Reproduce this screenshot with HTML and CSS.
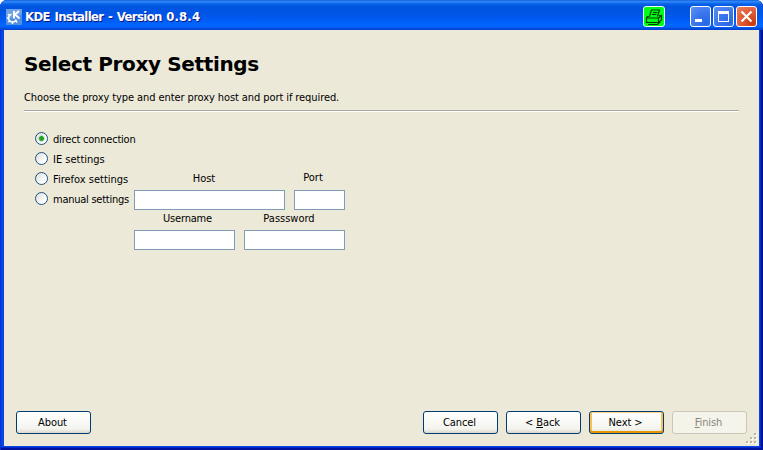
FILE: index.html
```html
<!DOCTYPE html>
<html lang="en">
<head>
<meta charset="utf-8">
<title>KDE Installer</title>
<link rel="stylesheet" href="styles.css">
</head>
<body>
<div class="window">
  <header class="titlebar">
    <svg class="app-icon" width="16" height="16" viewBox="0 0 16 16">
      <rect width="16" height="16" rx="1" fill="#5090dc"/>
      <path d="M0 0h16v5L0 11z" fill="#8bbbed" opacity=".45"/>
      <path d="M5.500 5.200A4 4 0 1 0 10.300 10.500" fill="none" stroke="#fff" stroke-width="1.500"/>
      <path d="M2 5l1.500 1.400M1 9h2M2.300 13l1.500-1.500M6.500 12.500V15M9.500 11.700l1.700 1.700" stroke="#fff" stroke-width="1.500"/>
      <path d="M8 2v7.500M13 2L9 5.500l4.500 4" fill="none" stroke="#fff" stroke-width="2"/>
    </svg>
    <h1 class="caption"><span>KDE Installer - Version <span class="number">0.8.4</span></span></h1>
    <svg class="printer" width="22" height="21" viewBox="0 0 22 21">
      <rect x=".5" y=".5" width="21" height="20" rx="2.5" fill="#00ff12" stroke="#e6ffe8"/>
      <path d="M6.500 10.500l2-6.500h8l-2 6.500M10 6.500h4.500M9 8.500h4.500M6 10.500H4.500l-1 1.500v4.500h12V12h-12M15.500 12l3-2.500v4.500l-3 2.500M18.500 9.500h-2.500M5 18.500h9.500l3-3" fill="none" stroke="#003c08" stroke-width="1.200"/>
    </svg>
    <div class="controls">
      <svg class="control" viewBox="0 0 19 19"><path d="M4 12h7v3H4z" fill="#fff"/></svg>
      <svg class="control" viewBox="0 0 19 19"><path d="M4 4h11v11H4zM5 7v7h9V7z" fill="#fff" fill-rule="evenodd"/></svg>
      <svg class="control close" viewBox="0 0 19 19"><path d="M4.500 4.500l10 10M14.500 4.500l-10 10" stroke="#fff" stroke-width="2.200"/></svg>
    </div>
  </header>
  <main class="page">
    <h2 class="heading"><span>Select Proxy Settings</span></h2>
    <p class="intro"><span>Choose the proxy type and enter proxy host and port if required.</span></p>
    <div class="rule"></div>
    <form class="proxy">
      <div class="modes">
        <label class="mode"><i class="radio on"></i><span class="t-direct">direct connection</span></label>
        <label class="mode"><i class="radio"></i><span class="t-ie">IE settings</span></label>
        <label class="mode"><i class="radio"></i><span class="t-firefox">Firefox settings</span></label>
        <label class="mode"><i class="radio"></i><span class="t-manual">manual settings</span></label>
      </div>
      <div class="fields">
        <div class="row">
          <label class="field host"><span>Host</span><input type="text"></label>
          <label class="field port"><span>Port</span><input type="text"></label>
        </div>
        <div class="row">
          <label class="field user"><span>Username</span><input type="text"></label>
          <label class="field pass"><span>Passsword</span><input type="text"></label>
        </div>
      </div>
    </form>
    <footer class="actions">
      <button class="about" type="button">About</button>
      <button type="button">Cancel</button>
      <button type="button">&lt; <u>B</u>ack</button>
      <button class="default" type="button">Next &gt;</button>
      <button type="button" disabled><u>F</u>inish</button>
    </footer>
    <svg class="grip" width="12" height="12" viewBox="0 0 12 12">
      <path d="M9 1h2v2H9zM5 5h2v2H5zM9 5h2v2H9zM1 9h2v2H1zM5 9h2v2H5zM9 9h2v2H9z" fill="#fff"/>
      <path d="M8 0h2v2H8zM4 4h2v2H4zM8 4h2v2H8zM0 8h2v2H0zM4 8h2v2H4zM8 8h2v2H8z" fill="#b8b4a2"/>
    </svg>
  </main>
</div>
</body>
</html>
```

FILE: styles.css
```css
* { box-sizing: border-box; }
body {
  margin: 0;
  background: #fff;
  color: #000;
  font: 11px/14px "DejaVu Sans Condensed", "DejaVu Sans", sans-serif;
}
.window {
  width: 763px;
  height: 450px;
  display: flex;
  flex-direction: column;
  padding: 0 4px 4px;
  border-radius: 7px 7px 0 0;
  background: #0546e4;
  box-shadow: inset 1px 0 #0831d9, inset -2px -2px #00139c, inset -3px -3px #0029c8;
}
.titlebar {
  height: 30px;
  flex: none;
  margin: 0 -4px;
  padding: 3px 6px 0;
  display: flex;
  align-items: center;
  border-radius: 7px 7px 0 0;
  background: linear-gradient(#0a4fd0 0, #2d87f8 1px, #2c85f5 2px, #0861e8 4px, #0054e0 7px, #0055e5 14px, #005bf5 20px, #0066ff 25px, #0060f8 27px, #0048d8 29px, #0040c8 30px);
}
.app-icon { margin-right: 3px; }
.caption {
  flex: 1;
  margin: 0;
  color: #fff;
  font: bold 13px/18px "DejaVu Sans Condensed", "DejaVu Sans", sans-serif;
  letter-spacing: -.65px;
  word-spacing: 1.2px;
  text-shadow: 1px 1px #0a1883;
  white-space: nowrap;
}
.number { letter-spacing: .1px; }
.printer { margin-right: 25px; }
.controls { display: flex; gap: 2px; }
.control {
  width: 21px;
  height: 21px;
  border: 1px solid #fff;
  border-radius: 3px;
  background: radial-gradient(circle at 80% 85%, #2768e8, #3b76ee 50%, #5c90f2);
}
.control.close { background: radial-gradient(circle at 80% 85%, #c93a10, #e05a35 50%, #ea8064); }
.page {
  position: relative;
  flex: 1;
  display: flex;
  flex-direction: column;
  padding: 20px 20px 0;
  background: #ece9d8;
}
.heading {
  margin: 0;
  height: 28px;
  font: bold 20px/28px "DejaVu Sans", sans-serif;
  letter-spacing: -.36px;
  white-space: nowrap;
}
.intro { margin: 13px 0 5px; letter-spacing: -.085px; white-space: nowrap; }
.rule { height: 2px; border-top: 1px solid #aca899; border-bottom: 1px solid #fff; }
.proxy { display: flex; margin: 17px 0 0 11px; }
.modes { width: 99px; margin-top: -1px; }
.mode { display: flex; align-items: center; gap: 5px; height: 20px; white-space: nowrap; }
.mode span { padding-top: 3px; }
.t-direct { letter-spacing: -.2px; }
.t-ie { letter-spacing: 0; }
.t-firefox { letter-spacing: 0; }
.t-manual { letter-spacing: -.25px; }
.radio {
  flex: none;
  width: 13px;
  height: 13px;
  border: 1px solid #1d5281;
  border-radius: 50%;
  background: linear-gradient(135deg, #dcdcd7, #fff 75%);
}
.radio.on { background: radial-gradient(circle, #21a121 0 2px, #8bcf8b 2.500px, transparent 3.500px), linear-gradient(135deg, #dcdcd7, #fff 75%); }
.fields { padding-top: 41px; }
.row { display: flex; gap: 9px; height: 40px; }
.field { display: flex; flex-direction: column; text-align: center; }
.field span { height: 20px; line-height: 18px; }
.field input {
  display: block;
  width: 100%;
  height: 20px;
  padding: 1px 3px;
  border: 1px solid #7f9db9;
  background: #fff;
  font: inherit;
}
.host { width: 151px; padding-right: 11px; }
.host input { width: 151px; }
.port { width: 51px; padding-right: 13px; }
.port span { line-height: 16px; }
.port input { width: 51px; }
.user { width: 101px; }
.pass { width: 101px; }
.pass span { margin-right: 11px; }
.user span { margin-left: 6px; letter-spacing: -.2px; }
.actions { display: flex; gap: 8px; margin: auto -8px 12px; }
button {
  width: 75px;
  height: 23px;
  padding: 1px 2px 0 0;
  border: 1px solid #003c74;
  border-radius: 3px;
  background: linear-gradient(#fff, #f4f4ef 80%, #dcd8cc);
  color: #000;
  font: inherit;
  letter-spacing: -.1px;
  white-space: nowrap;
}
.about { margin-right: auto; }
.default { box-shadow: inset 0 1px #fbd48a, inset 0 -2px #e59700, inset 2px 0 #f8bf56, inset -2px 0 #f8bf56; }
button:disabled { border-color: #c9c7ba; background: #f5f4ea; color: #87857a; }
u { text-underline-offset: 1px; text-decoration-thickness: 1px; }
.grip { position: absolute; right: 1px; bottom: 1px; }
```
